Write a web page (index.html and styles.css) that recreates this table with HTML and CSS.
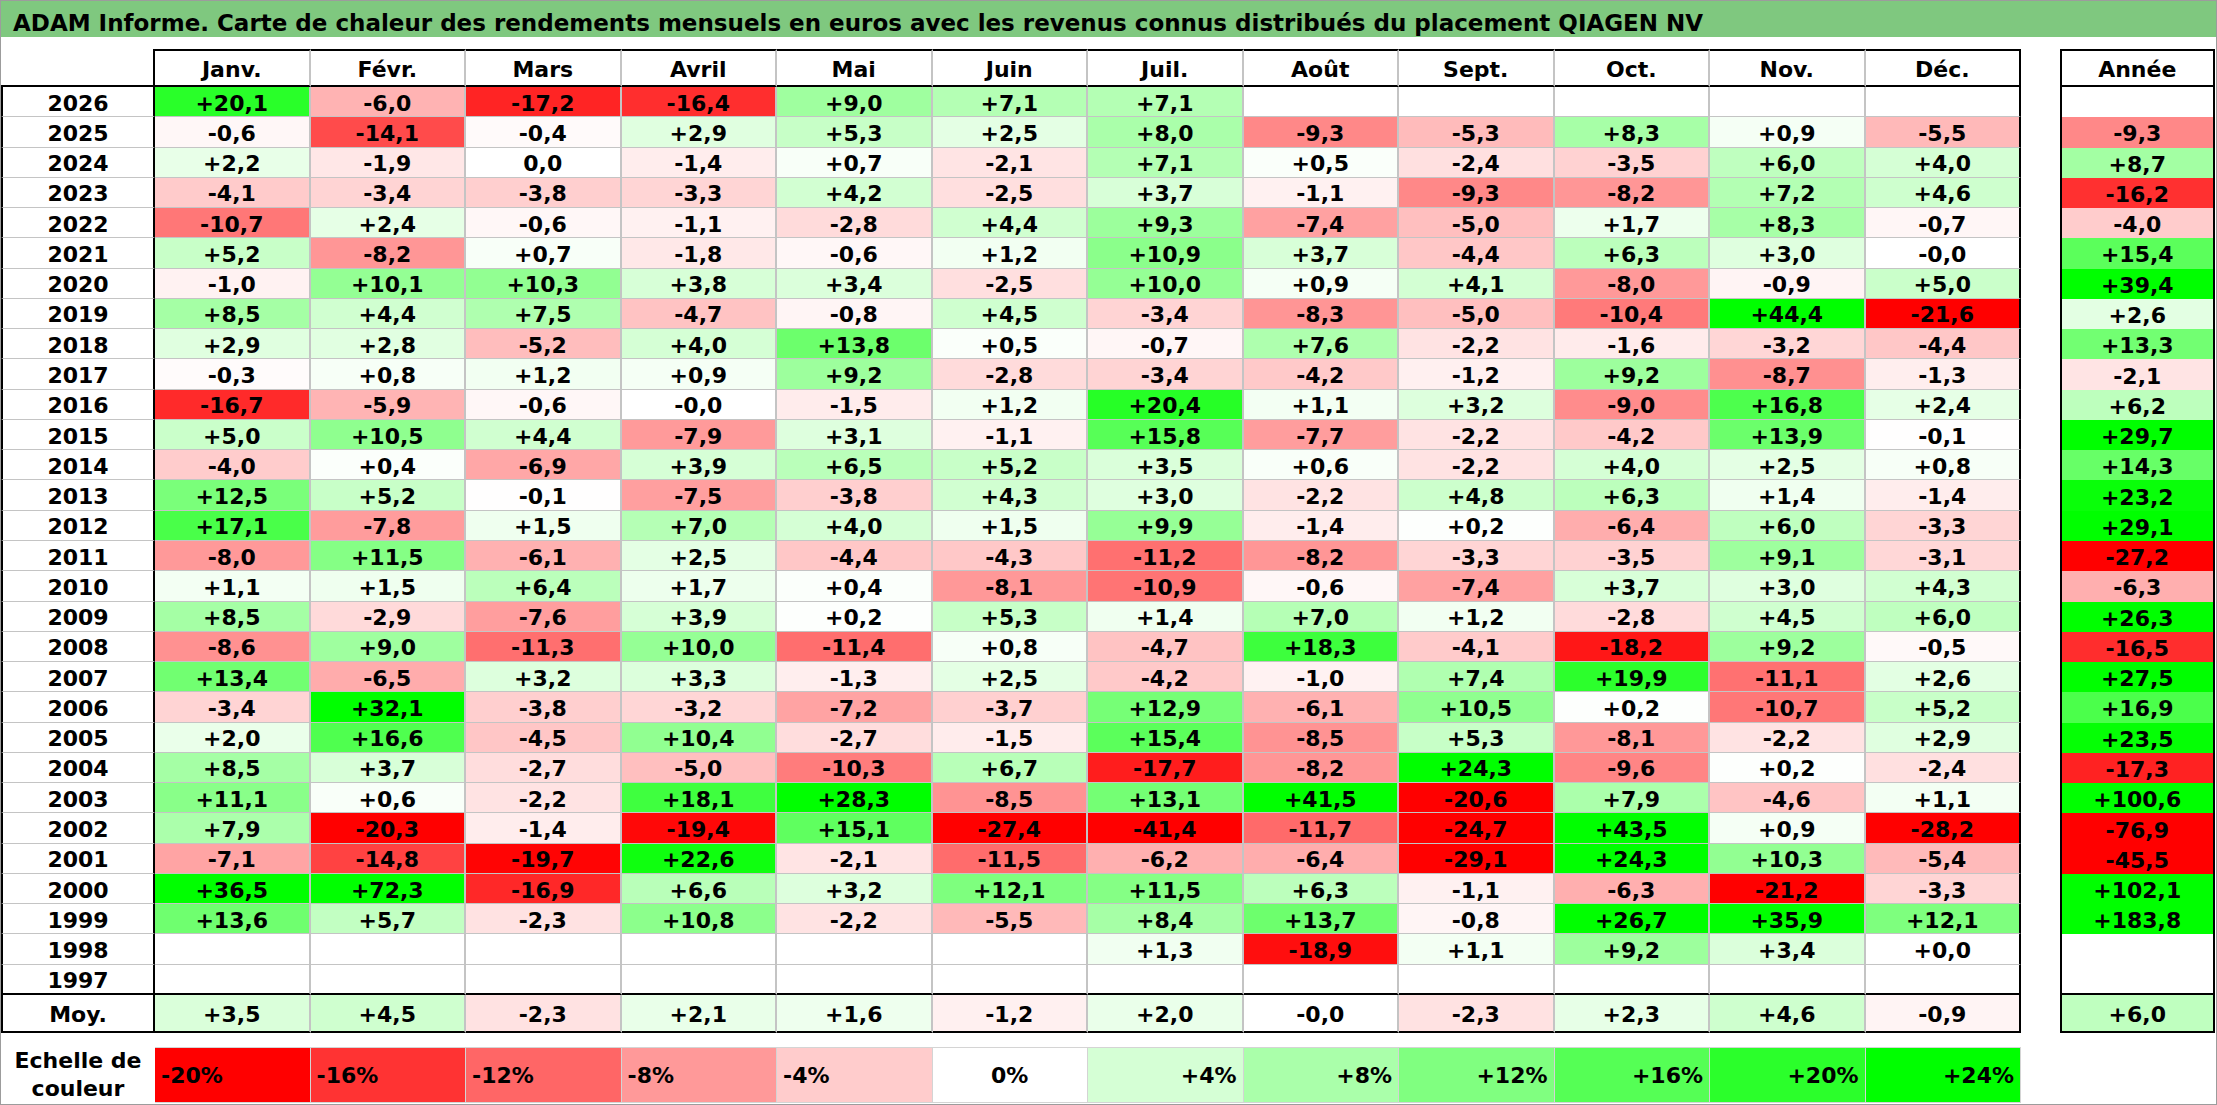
FILE: index.html
```html
<!DOCTYPE html>
<html lang="fr">
<head>
<meta charset="utf-8">
<title>ADAM Informe - QIAGEN NV</title>
<link rel="stylesheet" href="styles.css">
</head>
<body>
<div class="sheet">
  <div class="title">ADAM Informe. Carte de chaleur des rendements mensuels en euros avec les revenus connus distribués du placement QIAGEN NV</div>
  <div class="body">
    <div class="main">
      <div class="grid">
        <div class="row"><div class="corner"></div><div class="h">Janv.</div><div class="h">Févr.</div><div class="h">Mars</div><div class="h">Avril</div><div class="h">Mai</div><div class="h">Juin</div><div class="h">Juil.</div><div class="h">Août</div><div class="h">Sept.</div><div class="h">Oct.</div><div class="h">Nov.</div><div class="h dec">Déc.</div></div>
        <div class="row"><div class="y">2026</div><div class="c" style="--v:20.1">+20,1</div><div class="c" style="--v:-6.0">-6,0</div><div class="c" style="--v:-17.2">-17,2</div><div class="c" style="--v:-16.4">-16,4</div><div class="c" style="--v:9.0">+9,0</div><div class="c" style="--v:7.1">+7,1</div><div class="c" style="--v:7.1">+7,1</div><div class="c"></div><div class="c"></div><div class="c"></div><div class="c"></div><div class="c dec"></div></div>
        <div class="row"><div class="y">2025</div><div class="c" style="--v:-0.6">-0,6</div><div class="c" style="--v:-14.1">-14,1</div><div class="c" style="--v:-0.4">-0,4</div><div class="c" style="--v:2.9">+2,9</div><div class="c" style="--v:5.3">+5,3</div><div class="c" style="--v:2.5">+2,5</div><div class="c" style="--v:8.0">+8,0</div><div class="c" style="--v:-9.3">-9,3</div><div class="c" style="--v:-5.3">-5,3</div><div class="c" style="--v:8.3">+8,3</div><div class="c" style="--v:0.9">+0,9</div><div class="c dec" style="--v:-5.5">-5,5</div></div>
        <div class="row"><div class="y">2024</div><div class="c" style="--v:2.2">+2,2</div><div class="c" style="--v:-1.9">-1,9</div><div class="c" style="--v:0">0,0</div><div class="c" style="--v:-1.4">-1,4</div><div class="c" style="--v:0.7">+0,7</div><div class="c" style="--v:-2.1">-2,1</div><div class="c" style="--v:7.1">+7,1</div><div class="c" style="--v:0.5">+0,5</div><div class="c" style="--v:-2.4">-2,4</div><div class="c" style="--v:-3.5">-3,5</div><div class="c" style="--v:6.0">+6,0</div><div class="c dec" style="--v:4.0">+4,0</div></div>
        <div class="row"><div class="y">2023</div><div class="c" style="--v:-4.1">-4,1</div><div class="c" style="--v:-3.4">-3,4</div><div class="c" style="--v:-3.8">-3,8</div><div class="c" style="--v:-3.3">-3,3</div><div class="c" style="--v:4.2">+4,2</div><div class="c" style="--v:-2.5">-2,5</div><div class="c" style="--v:3.7">+3,7</div><div class="c" style="--v:-1.1">-1,1</div><div class="c" style="--v:-9.3">-9,3</div><div class="c" style="--v:-8.2">-8,2</div><div class="c" style="--v:7.2">+7,2</div><div class="c dec" style="--v:4.6">+4,6</div></div>
        <div class="row"><div class="y">2022</div><div class="c" style="--v:-10.7">-10,7</div><div class="c" style="--v:2.4">+2,4</div><div class="c" style="--v:-0.6">-0,6</div><div class="c" style="--v:-1.1">-1,1</div><div class="c" style="--v:-2.8">-2,8</div><div class="c" style="--v:4.4">+4,4</div><div class="c" style="--v:9.3">+9,3</div><div class="c" style="--v:-7.4">-7,4</div><div class="c" style="--v:-5.0">-5,0</div><div class="c" style="--v:1.7">+1,7</div><div class="c" style="--v:8.3">+8,3</div><div class="c dec" style="--v:-0.7">-0,7</div></div>
        <div class="row"><div class="y">2021</div><div class="c" style="--v:5.2">+5,2</div><div class="c" style="--v:-8.2">-8,2</div><div class="c" style="--v:0.7">+0,7</div><div class="c" style="--v:-1.8">-1,8</div><div class="c" style="--v:-0.6">-0,6</div><div class="c" style="--v:1.2">+1,2</div><div class="c" style="--v:10.9">+10,9</div><div class="c" style="--v:3.7">+3,7</div><div class="c" style="--v:-4.4">-4,4</div><div class="c" style="--v:6.3">+6,3</div><div class="c" style="--v:3.0">+3,0</div><div class="c dec" style="--v:0">-0,0</div></div>
        <div class="row"><div class="y">2020</div><div class="c" style="--v:-1.0">-1,0</div><div class="c" style="--v:10.1">+10,1</div><div class="c" style="--v:10.3">+10,3</div><div class="c" style="--v:3.8">+3,8</div><div class="c" style="--v:3.4">+3,4</div><div class="c" style="--v:-2.5">-2,5</div><div class="c" style="--v:10.0">+10,0</div><div class="c" style="--v:0.9">+0,9</div><div class="c" style="--v:4.1">+4,1</div><div class="c" style="--v:-8.0">-8,0</div><div class="c" style="--v:-0.9">-0,9</div><div class="c dec" style="--v:5.0">+5,0</div></div>
        <div class="row"><div class="y">2019</div><div class="c" style="--v:8.5">+8,5</div><div class="c" style="--v:4.4">+4,4</div><div class="c" style="--v:7.5">+7,5</div><div class="c" style="--v:-4.7">-4,7</div><div class="c" style="--v:-0.8">-0,8</div><div class="c" style="--v:4.5">+4,5</div><div class="c" style="--v:-3.4">-3,4</div><div class="c" style="--v:-8.3">-8,3</div><div class="c" style="--v:-5.0">-5,0</div><div class="c" style="--v:-10.4">-10,4</div><div class="c" style="--v:44.4">+44,4</div><div class="c dec" style="--v:-21.6">-21,6</div></div>
        <div class="row"><div class="y">2018</div><div class="c" style="--v:2.9">+2,9</div><div class="c" style="--v:2.8">+2,8</div><div class="c" style="--v:-5.2">-5,2</div><div class="c" style="--v:4.0">+4,0</div><div class="c" style="--v:13.8">+13,8</div><div class="c" style="--v:0.5">+0,5</div><div class="c" style="--v:-0.7">-0,7</div><div class="c" style="--v:7.6">+7,6</div><div class="c" style="--v:-2.2">-2,2</div><div class="c" style="--v:-1.6">-1,6</div><div class="c" style="--v:-3.2">-3,2</div><div class="c dec" style="--v:-4.4">-4,4</div></div>
        <div class="row"><div class="y">2017</div><div class="c" style="--v:-0.3">-0,3</div><div class="c" style="--v:0.8">+0,8</div><div class="c" style="--v:1.2">+1,2</div><div class="c" style="--v:0.9">+0,9</div><div class="c" style="--v:9.2">+9,2</div><div class="c" style="--v:-2.8">-2,8</div><div class="c" style="--v:-3.4">-3,4</div><div class="c" style="--v:-4.2">-4,2</div><div class="c" style="--v:-1.2">-1,2</div><div class="c" style="--v:9.2">+9,2</div><div class="c" style="--v:-8.7">-8,7</div><div class="c dec" style="--v:-1.3">-1,3</div></div>
        <div class="row"><div class="y">2016</div><div class="c" style="--v:-16.7">-16,7</div><div class="c" style="--v:-5.9">-5,9</div><div class="c" style="--v:-0.6">-0,6</div><div class="c" style="--v:0">-0,0</div><div class="c" style="--v:-1.5">-1,5</div><div class="c" style="--v:1.2">+1,2</div><div class="c" style="--v:20.4">+20,4</div><div class="c" style="--v:1.1">+1,1</div><div class="c" style="--v:3.2">+3,2</div><div class="c" style="--v:-9.0">-9,0</div><div class="c" style="--v:16.8">+16,8</div><div class="c dec" style="--v:2.4">+2,4</div></div>
        <div class="row"><div class="y">2015</div><div class="c" style="--v:5.0">+5,0</div><div class="c" style="--v:10.5">+10,5</div><div class="c" style="--v:4.4">+4,4</div><div class="c" style="--v:-7.9">-7,9</div><div class="c" style="--v:3.1">+3,1</div><div class="c" style="--v:-1.1">-1,1</div><div class="c" style="--v:15.8">+15,8</div><div class="c" style="--v:-7.7">-7,7</div><div class="c" style="--v:-2.2">-2,2</div><div class="c" style="--v:-4.2">-4,2</div><div class="c" style="--v:13.9">+13,9</div><div class="c dec" style="--v:-0.1">-0,1</div></div>
        <div class="row"><div class="y">2014</div><div class="c" style="--v:-4.0">-4,0</div><div class="c" style="--v:0.4">+0,4</div><div class="c" style="--v:-6.9">-6,9</div><div class="c" style="--v:3.9">+3,9</div><div class="c" style="--v:6.5">+6,5</div><div class="c" style="--v:5.2">+5,2</div><div class="c" style="--v:3.5">+3,5</div><div class="c" style="--v:0.6">+0,6</div><div class="c" style="--v:-2.2">-2,2</div><div class="c" style="--v:4.0">+4,0</div><div class="c" style="--v:2.5">+2,5</div><div class="c dec" style="--v:0.8">+0,8</div></div>
        <div class="row"><div class="y">2013</div><div class="c" style="--v:12.5">+12,5</div><div class="c" style="--v:5.2">+5,2</div><div class="c" style="--v:-0.1">-0,1</div><div class="c" style="--v:-7.5">-7,5</div><div class="c" style="--v:-3.8">-3,8</div><div class="c" style="--v:4.3">+4,3</div><div class="c" style="--v:3.0">+3,0</div><div class="c" style="--v:-2.2">-2,2</div><div class="c" style="--v:4.8">+4,8</div><div class="c" style="--v:6.3">+6,3</div><div class="c" style="--v:1.4">+1,4</div><div class="c dec" style="--v:-1.4">-1,4</div></div>
        <div class="row"><div class="y">2012</div><div class="c" style="--v:17.1">+17,1</div><div class="c" style="--v:-7.8">-7,8</div><div class="c" style="--v:1.5">+1,5</div><div class="c" style="--v:7.0">+7,0</div><div class="c" style="--v:4.0">+4,0</div><div class="c" style="--v:1.5">+1,5</div><div class="c" style="--v:9.9">+9,9</div><div class="c" style="--v:-1.4">-1,4</div><div class="c" style="--v:0.2">+0,2</div><div class="c" style="--v:-6.4">-6,4</div><div class="c" style="--v:6.0">+6,0</div><div class="c dec" style="--v:-3.3">-3,3</div></div>
        <div class="row"><div class="y">2011</div><div class="c" style="--v:-8.0">-8,0</div><div class="c" style="--v:11.5">+11,5</div><div class="c" style="--v:-6.1">-6,1</div><div class="c" style="--v:2.5">+2,5</div><div class="c" style="--v:-4.4">-4,4</div><div class="c" style="--v:-4.3">-4,3</div><div class="c" style="--v:-11.2">-11,2</div><div class="c" style="--v:-8.2">-8,2</div><div class="c" style="--v:-3.3">-3,3</div><div class="c" style="--v:-3.5">-3,5</div><div class="c" style="--v:9.1">+9,1</div><div class="c dec" style="--v:-3.1">-3,1</div></div>
        <div class="row"><div class="y">2010</div><div class="c" style="--v:1.1">+1,1</div><div class="c" style="--v:1.5">+1,5</div><div class="c" style="--v:6.4">+6,4</div><div class="c" style="--v:1.7">+1,7</div><div class="c" style="--v:0.4">+0,4</div><div class="c" style="--v:-8.1">-8,1</div><div class="c" style="--v:-10.9">-10,9</div><div class="c" style="--v:-0.6">-0,6</div><div class="c" style="--v:-7.4">-7,4</div><div class="c" style="--v:3.7">+3,7</div><div class="c" style="--v:3.0">+3,0</div><div class="c dec" style="--v:4.3">+4,3</div></div>
        <div class="row"><div class="y">2009</div><div class="c" style="--v:8.5">+8,5</div><div class="c" style="--v:-2.9">-2,9</div><div class="c" style="--v:-7.6">-7,6</div><div class="c" style="--v:3.9">+3,9</div><div class="c" style="--v:0.2">+0,2</div><div class="c" style="--v:5.3">+5,3</div><div class="c" style="--v:1.4">+1,4</div><div class="c" style="--v:7.0">+7,0</div><div class="c" style="--v:1.2">+1,2</div><div class="c" style="--v:-2.8">-2,8</div><div class="c" style="--v:4.5">+4,5</div><div class="c dec" style="--v:6.0">+6,0</div></div>
        <div class="row"><div class="y">2008</div><div class="c" style="--v:-8.6">-8,6</div><div class="c" style="--v:9.0">+9,0</div><div class="c" style="--v:-11.3">-11,3</div><div class="c" style="--v:10.0">+10,0</div><div class="c" style="--v:-11.4">-11,4</div><div class="c" style="--v:0.8">+0,8</div><div class="c" style="--v:-4.7">-4,7</div><div class="c" style="--v:18.3">+18,3</div><div class="c" style="--v:-4.1">-4,1</div><div class="c" style="--v:-18.2">-18,2</div><div class="c" style="--v:9.2">+9,2</div><div class="c dec" style="--v:-0.5">-0,5</div></div>
        <div class="row"><div class="y">2007</div><div class="c" style="--v:13.4">+13,4</div><div class="c" style="--v:-6.5">-6,5</div><div class="c" style="--v:3.2">+3,2</div><div class="c" style="--v:3.3">+3,3</div><div class="c" style="--v:-1.3">-1,3</div><div class="c" style="--v:2.5">+2,5</div><div class="c" style="--v:-4.2">-4,2</div><div class="c" style="--v:-1.0">-1,0</div><div class="c" style="--v:7.4">+7,4</div><div class="c" style="--v:19.9">+19,9</div><div class="c" style="--v:-11.1">-11,1</div><div class="c dec" style="--v:2.6">+2,6</div></div>
        <div class="row"><div class="y">2006</div><div class="c" style="--v:-3.4">-3,4</div><div class="c" style="--v:32.1">+32,1</div><div class="c" style="--v:-3.8">-3,8</div><div class="c" style="--v:-3.2">-3,2</div><div class="c" style="--v:-7.2">-7,2</div><div class="c" style="--v:-3.7">-3,7</div><div class="c" style="--v:12.9">+12,9</div><div class="c" style="--v:-6.1">-6,1</div><div class="c" style="--v:10.5">+10,5</div><div class="c" style="--v:0.2">+0,2</div><div class="c" style="--v:-10.7">-10,7</div><div class="c dec" style="--v:5.2">+5,2</div></div>
        <div class="row"><div class="y">2005</div><div class="c" style="--v:2.0">+2,0</div><div class="c" style="--v:16.6">+16,6</div><div class="c" style="--v:-4.5">-4,5</div><div class="c" style="--v:10.4">+10,4</div><div class="c" style="--v:-2.7">-2,7</div><div class="c" style="--v:-1.5">-1,5</div><div class="c" style="--v:15.4">+15,4</div><div class="c" style="--v:-8.5">-8,5</div><div class="c" style="--v:5.3">+5,3</div><div class="c" style="--v:-8.1">-8,1</div><div class="c" style="--v:-2.2">-2,2</div><div class="c dec" style="--v:2.9">+2,9</div></div>
        <div class="row"><div class="y">2004</div><div class="c" style="--v:8.5">+8,5</div><div class="c" style="--v:3.7">+3,7</div><div class="c" style="--v:-2.7">-2,7</div><div class="c" style="--v:-5.0">-5,0</div><div class="c" style="--v:-10.3">-10,3</div><div class="c" style="--v:6.7">+6,7</div><div class="c" style="--v:-17.7">-17,7</div><div class="c" style="--v:-8.2">-8,2</div><div class="c" style="--v:24.3">+24,3</div><div class="c" style="--v:-9.6">-9,6</div><div class="c" style="--v:0.2">+0,2</div><div class="c dec" style="--v:-2.4">-2,4</div></div>
        <div class="row"><div class="y">2003</div><div class="c" style="--v:11.1">+11,1</div><div class="c" style="--v:0.6">+0,6</div><div class="c" style="--v:-2.2">-2,2</div><div class="c" style="--v:18.1">+18,1</div><div class="c" style="--v:28.3">+28,3</div><div class="c" style="--v:-8.5">-8,5</div><div class="c" style="--v:13.1">+13,1</div><div class="c" style="--v:41.5">+41,5</div><div class="c" style="--v:-20.6">-20,6</div><div class="c" style="--v:7.9">+7,9</div><div class="c" style="--v:-4.6">-4,6</div><div class="c dec" style="--v:1.1">+1,1</div></div>
        <div class="row"><div class="y">2002</div><div class="c" style="--v:7.9">+7,9</div><div class="c" style="--v:-20.3">-20,3</div><div class="c" style="--v:-1.4">-1,4</div><div class="c" style="--v:-19.4">-19,4</div><div class="c" style="--v:15.1">+15,1</div><div class="c" style="--v:-27.4">-27,4</div><div class="c" style="--v:-41.4">-41,4</div><div class="c" style="--v:-11.7">-11,7</div><div class="c" style="--v:-24.7">-24,7</div><div class="c" style="--v:43.5">+43,5</div><div class="c" style="--v:0.9">+0,9</div><div class="c dec" style="--v:-28.2">-28,2</div></div>
        <div class="row"><div class="y">2001</div><div class="c" style="--v:-7.1">-7,1</div><div class="c" style="--v:-14.8">-14,8</div><div class="c" style="--v:-19.7">-19,7</div><div class="c" style="--v:22.6">+22,6</div><div class="c" style="--v:-2.1">-2,1</div><div class="c" style="--v:-11.5">-11,5</div><div class="c" style="--v:-6.2">-6,2</div><div class="c" style="--v:-6.4">-6,4</div><div class="c" style="--v:-29.1">-29,1</div><div class="c" style="--v:24.3">+24,3</div><div class="c" style="--v:10.3">+10,3</div><div class="c dec" style="--v:-5.4">-5,4</div></div>
        <div class="row"><div class="y">2000</div><div class="c" style="--v:36.5">+36,5</div><div class="c" style="--v:72.3">+72,3</div><div class="c" style="--v:-16.9">-16,9</div><div class="c" style="--v:6.6">+6,6</div><div class="c" style="--v:3.2">+3,2</div><div class="c" style="--v:12.1">+12,1</div><div class="c" style="--v:11.5">+11,5</div><div class="c" style="--v:6.3">+6,3</div><div class="c" style="--v:-1.1">-1,1</div><div class="c" style="--v:-6.3">-6,3</div><div class="c" style="--v:-21.2">-21,2</div><div class="c dec" style="--v:-3.3">-3,3</div></div>
        <div class="row"><div class="y">1999</div><div class="c" style="--v:13.6">+13,6</div><div class="c" style="--v:5.7">+5,7</div><div class="c" style="--v:-2.3">-2,3</div><div class="c" style="--v:10.8">+10,8</div><div class="c" style="--v:-2.2">-2,2</div><div class="c" style="--v:-5.5">-5,5</div><div class="c" style="--v:8.4">+8,4</div><div class="c" style="--v:13.7">+13,7</div><div class="c" style="--v:-0.8">-0,8</div><div class="c" style="--v:26.7">+26,7</div><div class="c" style="--v:35.9">+35,9</div><div class="c dec" style="--v:12.1">+12,1</div></div>
        <div class="row"><div class="y">1998</div><div class="c"></div><div class="c"></div><div class="c"></div><div class="c"></div><div class="c"></div><div class="c"></div><div class="c" style="--v:1.3">+1,3</div><div class="c" style="--v:-18.9">-18,9</div><div class="c" style="--v:1.1">+1,1</div><div class="c" style="--v:9.2">+9,2</div><div class="c" style="--v:3.4">+3,4</div><div class="c dec" style="--v:0">+0,0</div></div>
        <div class="row"><div class="y end">1997</div><div class="c end"></div><div class="c end"></div><div class="c end"></div><div class="c end"></div><div class="c end"></div><div class="c end"></div><div class="c end"></div><div class="c end"></div><div class="c end"></div><div class="c end"></div><div class="c end"></div><div class="c dec end"></div></div>
        <div class="row"><div class="y m">Moy.</div><div class="c m" style="--v:3.5">+3,5</div><div class="c m" style="--v:4.5">+4,5</div><div class="c m" style="--v:-2.3">-2,3</div><div class="c m" style="--v:2.1">+2,1</div><div class="c m" style="--v:1.6">+1,6</div><div class="c m" style="--v:-1.2">-1,2</div><div class="c m" style="--v:2.0">+2,0</div><div class="c m" style="--v:0">-0,0</div><div class="c m" style="--v:-2.3">-2,3</div><div class="c m" style="--v:2.3">+2,3</div><div class="c m" style="--v:4.6">+4,6</div><div class="c dec m" style="--v:-0.9">-0,9</div></div>
      </div>
      <div class="scale">
        <div class="sl">Echelle de<br>couleur</div>
        <div class="s neg" style="--v:-20">-20%</div>
        <div class="s neg" style="--v:-16">-16%</div>
        <div class="s neg" style="--v:-12">-12%</div>
        <div class="s neg" style="--v:-8">-8%</div>
        <div class="s neg" style="--v:-4">-4%</div>
        <div class="s zero" style="--v:0">0%</div>
        <div class="s pos" style="--v:4">+4%</div>
        <div class="s pos" style="--v:8">+8%</div>
        <div class="s pos" style="--v:12">+12%</div>
        <div class="s pos" style="--v:16">+16%</div>
        <div class="s pos" style="--v:20">+20%</div>
        <div class="s pos" style="--v:24">+24%</div>
      </div>
    </div>
    <div class="agrid">
      <div class="ah">Année</div>
      <div class="a"></div>
      <div class="a" style="--v:-9.3">-9,3</div>
      <div class="a" style="--v:8.7">+8,7</div>
      <div class="a" style="--v:-16.2">-16,2</div>
      <div class="a" style="--v:-4.0">-4,0</div>
      <div class="a" style="--v:15.4">+15,4</div>
      <div class="a" style="--v:39.4">+39,4</div>
      <div class="a" style="--v:2.6">+2,6</div>
      <div class="a" style="--v:13.3">+13,3</div>
      <div class="a" style="--v:-2.1">-2,1</div>
      <div class="a" style="--v:6.2">+6,2</div>
      <div class="a" style="--v:29.7">+29,7</div>
      <div class="a" style="--v:14.3">+14,3</div>
      <div class="a" style="--v:23.2">+23,2</div>
      <div class="a" style="--v:29.1">+29,1</div>
      <div class="a" style="--v:-27.2">-27,2</div>
      <div class="a" style="--v:-6.3">-6,3</div>
      <div class="a" style="--v:26.3">+26,3</div>
      <div class="a" style="--v:-16.5">-16,5</div>
      <div class="a" style="--v:27.5">+27,5</div>
      <div class="a" style="--v:16.9">+16,9</div>
      <div class="a" style="--v:23.5">+23,5</div>
      <div class="a" style="--v:-17.3">-17,3</div>
      <div class="a" style="--v:100.6">+100,6</div>
      <div class="a" style="--v:-76.9">-76,9</div>
      <div class="a" style="--v:-45.5">-45,5</div>
      <div class="a" style="--v:102.1">+102,1</div>
      <div class="a" style="--v:183.8">+183,8</div>
      <div class="a"></div>
      <div class="a end"></div>
      <div class="a m" style="--v:6.0">+6,0</div>
    </div>
  </div>
</div>
</body>
</html>
```

FILE: styles.css
```css
* {
  box-sizing: border-box;
}

html,
body {
  margin: 0;
  padding: 0;
  background: #ffffff;
}

.sheet {
  width: 2217px;
  height: 1105px;
  border: 1px solid #9c9c9c;
  background: #ffffff;
  font-family: "DejaVu Sans", Verdana, sans-serif;
  font-weight: 700;
  font-size: 22px;
  color: #000000;
  overflow: hidden;
}

.title {
  height: 36px;
  background: #7fc87f;
  padding: 9px 0 0 12px;
  font-size: 23px;
  line-height: 26px;
  white-space: nowrap;
}

.body {
  display: flex;
  align-items: flex-start;
  gap: 38.5px;
  margin-top: 12px;
}

.main {
  display: flex;
  flex-direction: column;
}

.grid {
  display: grid;
  grid-template-columns: 154px repeat(12, 155.5px);
  grid-template-rows: 38px repeat(30, 30.267px) 38px;
}

.agrid {
  display: grid;
  grid-template-columns: 155.5px;
  grid-template-rows: 38px repeat(30, 30.267px) 38px;
}

.row {
  display: contents;
}

.corner,
.h,
.y,
.c,
.a,
.ah {
  display: flex;
  align-items: center;
  justify-content: center;
  padding-top: 4px;
  line-height: 1;
  white-space: nowrap;
}

/* heat colour computed from the cell value (--v) */
.c,
.a,
.s {
  --p: clamp(0, var(--v) / 24, 1);
  --n: clamp(0, var(--v) / -20, 1);
  background-color: rgb(calc(255 - 255 * var(--p)), calc(255 - 255 * var(--n)), calc(255 - 255 * (var(--p) + var(--n))));
}

.corner {
  border-right: 2px solid #000000;
  border-bottom: 2px solid #000000;
}

.h {
  border-top: 2px solid #000000;
  border-bottom: 2px solid #000000;
  border-right: 2px solid #c4c4c4;
}

.y {
  border-left: 2px solid #000000;
  border-right: 2px solid #000000;
  border-bottom: 1px solid #c4c4c4;
}

.c {
  border-right: 2px solid #c4c4c4;
  border-bottom: 1px solid #c4c4c4;
}

.h.dec,
.c.dec {
  border-right: 2px solid #000000;
}

.y.end,
.c.end,
.a.end {
  border-bottom: 2px solid #000000;
}

.y.m,
.c.m,
.a.m {
  border-bottom: 2px solid #000000;
}

.ah {
  border: 2px solid #000000;
}

.a {
  border-left: 2px solid #000000;
  border-right: 2px solid #000000;
}

.scale {
  display: grid;
  grid-template-columns: 154px repeat(12, 155.5px);
  height: 56px;
  margin-top: 14px;
}

.sl {
  display: flex;
  align-items: center;
  justify-content: center;
  text-align: center;
  line-height: 28px;
}

.s {
  display: flex;
  align-items: center;
  padding: 2px 6px 0 6px;
  line-height: 1;
  white-space: nowrap;
  border-top: 1px solid #d4d4d4;
  border-right: 1px solid #d4d4d4;
  border-bottom: 1px solid #d4d4d4;
}

.s.neg {
  justify-content: flex-start;
}

.s.zero {
  justify-content: center;
}

.s.pos {
  justify-content: flex-end;
}
```
